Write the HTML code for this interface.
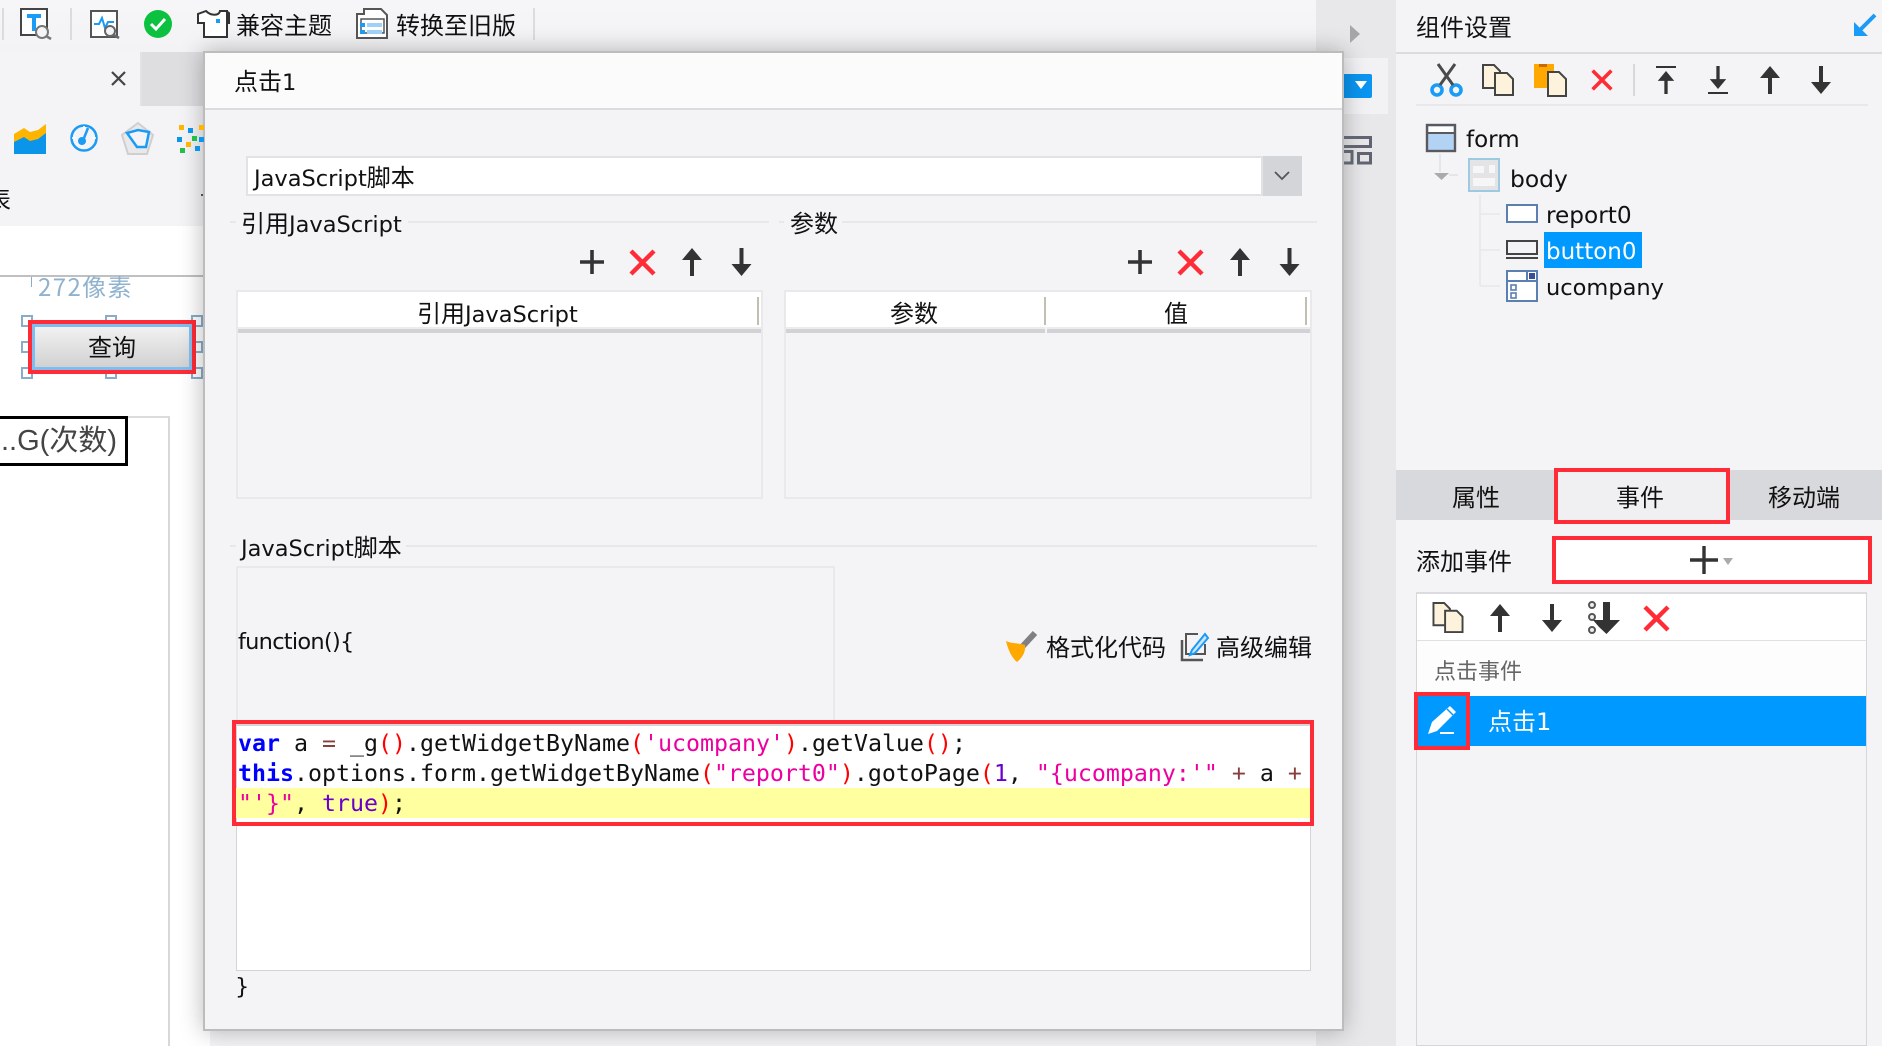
<!DOCTYPE html>
<html lang="zh"><head><meta charset="utf-8"><title>点击1</title>
<style>
html,body{margin:0;padding:0;background:#f4f4f7}
body{position:relative;width:1882px;height:1046px;overflow:hidden;font-family:"DejaVu Sans","Noto Sans CJK SC",sans-serif;color:#111}
.b{position:absolute;box-sizing:border-box}
.t{position:absolute;white-space:nowrap;font-size:22.5px;line-height:30px;height:30px;margin-top:-1px}
.t i,.c{font-family:"Noto Sans CJK SC","Liberation Sans",sans-serif;font-style:normal;font-size:24px}
.red{position:absolute;box-sizing:border-box;border:4px solid #ff2b36}
.h{position:absolute;box-sizing:border-box;width:12px;height:12px;border:2px solid #8aacc8;background:#fff}
.th{position:absolute;background:#fff}
.tl{position:absolute;height:6px;background:linear-gradient(#ececee 0,#ececee 33%,#d2d2d4 34%,#d2d2d4 100%)}
.dv{position:absolute;width:2px;background:#c2beb0}
.code{position:absolute;left:238px;font-family:"DejaVu Sans Mono","Liberation Mono",monospace;font-size:23.25px;line-height:30px;height:30px;white-space:pre;color:#111}
.k{color:#00f;font-weight:bold}.o{color:#8a3f3f}.p{color:#f00}.s{color:#ec00a0}.n{color:#6a00cc}
</style></head><body>

<!-- top toolbar -->
<div class="b" style="left:0;top:0;width:1316px;height:52px;background:linear-gradient(#f6f6f8,#f3f3f5)"></div>
<div class="b" style="left:1316px;top:0;width:80px;height:1046px;background:#e8e8ea"></div>
<div class="b" style="left:2px;top:8px;width:2px;height:32px;background:#dcdcde"></div>
<div class="b" style="left:70px;top:8px;width:2px;height:32px;background:#dcdcde"></div>
<div class="b" style="left:533px;top:8px;width:2px;height:32px;background:#dcdcde"></div>
<div class="t c" style="left:236px;top:10px">兼容主题</div>
<div class="t c" style="left:396px;top:10px">转换至旧版</div>

<!-- left tabs -->
<div class="b" style="left:0;top:52px;width:142px;height:54px;background:#f4f4f7;border-right:2px solid #e2e2e4"></div>
<div class="b" style="left:142px;top:52px;width:68px;height:54px;background:#dedee0"></div>
<div class="t c" style="left:-13px;top:184px">表</div>
<div class="b" style="left:201px;top:194px;width:3px;height:2px;background:#555"></div>

<!-- designer canvas -->
<div class="b" style="left:0;top:226px;width:210px;height:820px;background:#fff"></div>
<div class="b" style="left:0;top:275px;width:210px;height:2px;background:#c0c0c0"></div>
<div class="b" style="left:31px;top:277px;width:1px;height:10px;background:#8aacc8"></div>
<div class="t c" style="left:38px;top:272px;color:#8fb2cf;letter-spacing:1.4px">272像素</div>
<div class="h" style="left:21px;top:315px"></div><div class="h" style="left:105px;top:315px"></div><div class="h" style="left:191px;top:315px"></div>
<div class="h" style="left:21px;top:341px"></div><div class="h" style="left:191px;top:341px"></div>
<div class="h" style="left:21px;top:367px"></div><div class="h" style="left:105px;top:367px"></div><div class="h" style="left:191px;top:367px"></div>
<div class="b" style="left:28px;top:320px;width:168px;height:54px;border:4px solid #ff2b36;background:linear-gradient(#f4f4f4,#cfcfcf);box-shadow:inset 0 0 0 3px #7fbdf0"></div>
<div class="t c" style="left:88px;top:332px">查询</div>
<div class="b" style="left:0;top:416px;width:170px;height:630px;border-top:2px solid #dcdcdc;border-right:2px solid #d8d8d8"></div>
<div class="b" style="left:0;top:416px;width:128px;height:50px;border:3px solid #000;border-left:0;background:#fff"></div>
<div class="t" style="left:1px;top:427px;font-size:29px;font-family:'Liberation Sans','Noto Sans CJK SC',sans-serif;color:#444">..G(次数)</div>

<!-- right panel -->
<div class="b" style="left:1396px;top:0;width:486px;height:1046px;background:#f4f4f7"></div>
<div class="t c" style="left:1416px;top:12px">组件设置</div>
<div class="b" style="left:1396px;top:52px;width:486px;height:2px;background:#dcdcde"></div>
<div class="b" style="left:1416px;top:104px;width:452px;height:2px;background:#e8e8ea"></div>
<div class="b" style="left:1344px;top:58px;width:44px;height:56px;background:#f2f2f5"></div>
<div class="b" style="left:1344px;top:74px;width:28px;height:24px;background:#0a95f0;border-radius:0 2px 2px 0"></div>

<div class="t" style="left:1466px;top:126px;font-size:23px">form</div>
<div class="t" style="left:1510px;top:165px;font-size:23.4px">body</div>
<div class="t" style="left:1546px;top:202px;font-size:23.2px">report0</div>
<div class="b" style="left:1544px;top:232px;width:98px;height:36px;background:#09f"></div>
<div class="t" style="left:1546px;top:238px;color:#fff;font-size:23px">button0</div>
<div class="t" style="left:1546px;top:274px">ucompany</div>

<!-- tabs -->
<div class="b" style="left:1396px;top:470px;width:486px;height:50px;background:#d8d9dc"></div>
<div class="b" style="left:1554px;top:470px;width:176px;height:52px;background:#f0f0f3"></div>
<div class="t c" style="left:1452px;top:482px">属性</div>
<div class="t c" style="left:1616px;top:482px">事件</div>
<div class="t c" style="left:1768px;top:482px">移动端</div>
<div class="red" style="left:1554px;top:468px;width:176px;height:56px"></div>

<div class="t c" style="left:1416px;top:546px">添加事件</div>
<div class="b" style="left:1554px;top:538px;width:316px;height:44px;background:#fff;border:2px solid #dedee0"></div>
<div class="red" style="left:1552px;top:536px;width:320px;height:48px"></div>

<!-- event list -->
<div class="b" style="left:1416px;top:592px;width:451px;height:454px;border:1px solid #d6d6da;border-top:2px solid #dcdce0;background:#f4f4f7"></div>
<div class="b" style="left:1417px;top:594px;width:449px;height:47px;background:#fff;border-bottom:1px solid #e0e0e3"></div>
<div class="b" style="left:1417px;top:641px;width:449px;height:55px;background:#fdfdfe"></div>
<div class="t c" style="left:1434px;top:656px;font-size:22px;color:#666">点击事件</div>
<div class="b" style="left:1417px;top:696px;width:449px;height:50px;background:#09f"></div>
<div class="t c" style="left:1488px;top:706px;color:#fff">点击<span style="font-family:'DejaVu Sans'">1</span></div>
<div class="red" style="left:1414px;top:692px;width:56px;height:58px"></div>

<!-- dialog -->
<div class="b" style="left:203px;top:51px;width:1141px;height:980px;background:#f4f4f7;border:2px solid #bcbcbc;box-shadow:0 0 22px rgba(0,0,0,.28)">
</div>
<div class="b" style="left:205px;top:53px;width:1137px;height:55px;background:#fbfbfc"></div>
<div class="b" style="left:205px;top:108px;width:1137px;height:2px;background:#dcdcdf"></div>
<div class="t" style="left:234px;top:66px"><i>点击</i><span style="font-family:'DejaVu Sans'">1</span></div>

<div class="b" style="left:246px;top:156px;width:1017px;height:40px;background:#fff;border:2px solid #e2e2e5"></div>
<div class="b" style="left:1263px;top:156px;width:39px;height:40px;background:#d4d5d9"></div>
<div class="t" style="left:254px;top:162px">JavaScript<i>脚本</i></div>

<!-- fieldset 1 -->
<div class="b" style="left:230px;top:221px;width:539px;height:2px;background:#e8e8ea"></div>
<div class="b" style="left:779px;top:221px;width:538px;height:2px;background:#e8e8ea"></div>
<div class="b" style="left:236px;top:210px;width:172px;height:30px;background:#f4f4f7"></div>
<div class="b" style="left:784px;top:210px;width:58px;height:30px;background:#f4f4f7"></div>
<div class="t" style="left:241px;top:208px"><i>引用</i>JavaScript</div>
<div class="t c" style="left:790px;top:208px">参数</div>

<!-- tables -->
<div class="b" style="left:236px;top:290px;width:527px;height:209px;border:2px solid #e9e9ec"></div>
<div class="th" style="left:238px;top:292px;width:523px;height:35px"></div>
<div class="tl" style="left:238px;top:327px;width:523px"></div>
<div class="dv" style="left:757px;top:297px;height:28px"></div>
<div class="t" style="left:417px;top:298px"><i>引用</i>JavaScript</div>

<div class="b" style="left:784px;top:290px;width:528px;height:209px;border:2px solid #e9e9ec"></div>
<div class="th" style="left:786px;top:292px;width:524px;height:35px"></div>
<div class="tl" style="left:786px;top:327px;width:259px"></div>
<div class="tl" style="left:1047px;top:327px;width:263px"></div>
<div class="dv" style="left:1044px;top:297px;height:28px"></div>
<div class="dv" style="left:1305px;top:297px;height:28px"></div>
<div class="t c" style="left:890px;top:298px">参数</div>
<div class="t c" style="left:1164px;top:298px">值</div>

<!-- fieldset 2 -->
<div class="b" style="left:230px;top:545px;width:1087px;height:2px;background:#e8e8ea"></div>
<div class="b" style="left:236px;top:532px;width:170px;height:30px;background:#f4f4f7"></div>
<div class="t" style="left:241px;top:532px">JavaScript<i>脚本</i></div>
<div class="b" style="left:236px;top:566px;width:599px;height:156px;border:2px solid #e9e9ec;border-bottom:0"></div>
<div class="t" style="left:238px;top:628px;letter-spacing:-.75px">function(){</div>
<div class="t c" style="left:1046px;top:632px">格式化代码</div>
<div class="t c" style="left:1216px;top:632px">高级编辑</div>

<!-- editor -->
<div class="b" style="left:236px;top:724px;width:1075px;height:247px;background:#fff;border:1px solid #d4d4d8;border-top:2px solid #d4d4d8"></div>
<div class="b" style="left:236px;top:788px;width:1074px;height:30px;background:#ffff9f"></div>
<div class="code" style="top:729px"><span class="k">var</span> a <span class="o">=</span> _g<span class="p">()</span>.getWidgetByName<span class="p">(</span><span class="s">'ucompany'</span><span class="p">)</span>.getValue<span class="p">()</span>;</div>
<div class="code" style="top:759px"><span class="k">this</span>.options.form.getWidgetByName<span class="p">(</span><span class="s">"report0"</span><span class="p">)</span>.gotoPage<span class="p">(</span><span class="n">1</span>, <span class="s">"{ucompany:'"</span> <span class="o">+</span> a <span class="o">+</span></div>
<div class="code" style="top:789px"><span class="s">"'}"</span>, <span class="n">true</span><span class="p">)</span>;</div>
<div class="red" style="left:232px;top:720px;width:1082px;height:106px"></div>
<div class="t" style="left:235px;top:973px">}</div>

<!-- icon overlay -->
<svg width="1882" height="1046" viewBox="0 0 1882 1046" style="position:absolute;left:0;top:0">
<defs>
<symbol id="up" viewBox="0 0 20 28" overflow="visible"><path d="M10 0L20 12H12V28H8V12H0Z" fill="#333"/></symbol>
<symbol id="dn" viewBox="0 0 20 28" overflow="visible"><path d="M8 0H12V16H20L10 28L0 16H8Z" fill="#333"/></symbol>
<symbol id="pl" viewBox="0 0 24 24" overflow="visible"><path d="M12 0V24M0 12H24" stroke="#333" stroke-width="3.6" fill="none"/></symbol>
<symbol id="xx" viewBox="0 0 27 27" overflow="visible"><path d="M2 2L25 25M25 2L2 25" stroke="#ff2b36" stroke-width="4.4" fill="none"/></symbol>
<symbol id="cp" viewBox="0 0 32 32" overflow="visible"><path d="M1 1H12L18 7V24H1Z" fill="#fdf3dc" stroke="#444" stroke-width="2"/><path d="M13 9H25L31 15V31H13Z" fill="#fdf3dc" stroke="#444" stroke-width="2"/></symbol>
</defs>

<!-- top toolbar icons -->
<rect x="21" y="9" width="26" height="26" fill="#fff" stroke="#444" stroke-width="2"/>
<path d="M27 14H41V18H36V31H32V18H27Z" fill="#1a9bf5"/>
<circle cx="42" cy="32" r="6" fill="#f4f4f7" stroke="#777" stroke-width="2"/><path d="M46 36L51 39" stroke="#777" stroke-width="2.5"/>
<rect x="91" y="11" width="26" height="26" fill="#fff" stroke="#555" stroke-width="2"/>
<path d="M94 24H99L102 18L105 28L108 22H114" stroke="#1a9bf5" stroke-width="2" fill="none"/>
<circle cx="110" cy="31" r="5" fill="#f4f4f7" stroke="#666" stroke-width="2"/><path d="M114 35L119 38" stroke="#666" stroke-width="2.5"/>
<ellipse cx="158" cy="24" rx="14" ry="14" fill="#0cc040"/><path d="M151 24L156 29L165 19" stroke="#fff" stroke-width="3" fill="none"/>
<path d="M206 11L198 14V23H204V37H227V11H220C219 16 211 16 206 11Z" fill="#fff" stroke="#333" stroke-width="2"/>
<path d="M226 11L229 13V23H227" fill="none" stroke="#333" stroke-width="2"/>
<rect x="216" y="19" width="4" height="4" fill="#1a9bf5"/>
<path d="M364 9H381L387 15V38H357V14H364Z" fill="#fff" stroke="#555" stroke-width="2"/>
<path d="M361 19H384V33H361Z" fill="#fff" stroke="#555" stroke-width="1.5"/>
<rect x="360" y="23" width="5" height="4" fill="#1a9bf5"/><rect x="360" y="30" width="5" height="4" fill="#1a9bf5"/><rect x="367" y="23" width="15" height="4" fill="#9fd0f7"/><rect x="367" y="30" width="15" height="4" fill="#9fd0f7"/>

<!-- close -->
<path d="M112 72L125 85M125 72L112 85" stroke="#444" stroke-width="2.2"/>

<!-- chart icons -->
<path d="M14 134L24 128L30 132L38 130L46 124V154H14Z" fill="#ffb400"/>
<path d="M14 142L24 137L30 141L38 139L46 133V154H14Z" fill="#0a95ea"/>
<circle cx="84" cy="138" r="12.5" fill="none" stroke="#1a9bf5" stroke-width="2.5"/>
<circle cx="82" cy="141" r="4" fill="#1a9bf5"/><path d="M84 138L88 128" stroke="#1a9bf5" stroke-width="2.5"/>
<path d="M72 138H76M92 138H96M84 126V130" stroke="#fff" stroke-width="1.5"/>
<path d="M138 123L153 135L147 154H128L122 135Z" fill="#e9e9ea" stroke="#cfcfcf" stroke-width="2"/>
<path d="M127 133L138 130L149 132L146 147L137 147Z" fill="#f4f4f7" stroke="#1a9bf5" stroke-width="2.5"/>
<g>
<rect x="179" y="125" width="5" height="5" fill="#ffb400"/><rect x="188" y="128" width="5" height="5" fill="#0a95ea"/><rect x="199" y="125" width="5" height="5" fill="#ffb400"/>
<rect x="177" y="137" width="5" height="5" fill="#0a95ea"/><rect x="192" y="136" width="5" height="5" fill="#22c04a"/><rect x="199" y="137" width="5" height="5" fill="#0a95ea"/>
<rect x="186" y="142" width="5" height="5" fill="#ffb400"/><rect x="195" y="146" width="5" height="5" fill="#0a95ea"/><rect x="180" y="148" width="5" height="5" fill="#22c04a"/>
</g>

<!-- side strip -->
<path d="M1350 25L1360 34L1350 43Z" fill="#a6a6a8"/>
<path d="M1355 81L1367 81L1361 89Z" fill="#fff"/>
<path d="M1344 137.5H1370.5V146.5H1344M1344 151.5H1352V163H1344M1358.5 153.5H1370.5V163H1358.5Z" fill="none" stroke="#5f6470" stroke-width="3"/>

<!-- chevron -->
<path d="M1275 172L1282 179L1289 172" fill="none" stroke="#555" stroke-width="1.8"/>

<!-- dialog toolbars -->
<use href="#pl" x="580" y="250" width="24" height="24"/><use href="#xx" x="629" y="249" width="27" height="27"/><use href="#up" x="682" y="248" width="20" height="28"/><use href="#dn" x="731.5" y="248" width="20" height="28"/>
<use href="#pl" x="1128" y="250" width="24" height="24"/><use href="#xx" x="1177" y="249" width="27" height="27"/><use href="#up" x="1230" y="248" width="20" height="28"/><use href="#dn" x="1279.5" y="248" width="20" height="28"/>

<!-- broom -->
<path d="M1022 647L1035 633" stroke="#808084" stroke-width="6"/>
<path d="M1006 641C1012 644 1020 643 1025 645C1026 652 1022 658 1017 662C1012 658 1008 650 1006 641Z" fill="#ffa800"/>
<!-- edit -->
<path d="M1198 634H1186V654H1205V644" fill="none" stroke="#555" stroke-width="2"/>
<path d="M1182 640V660H1203" fill="none" stroke="#555" stroke-width="2.5"/>
<path d="M1192 650L1190 655L1195 653L1208 638L1205 634Z" fill="#cce6fb" stroke="#1a9bf5" stroke-width="2"/>

<!-- right toolbar -->
<circle cx="1437" cy="90" r="5" fill="none" stroke="#1a9bf5" stroke-width="3.6"/><circle cx="1456" cy="90" r="5" fill="none" stroke="#1a9bf5" stroke-width="3.6"/>
<path d="M1440 85L1455 64M1453 85L1438 64" stroke="#4a4a4a" stroke-width="3"/>
<use href="#cp" x="1482" y="64" width="32" height="32"/>
<rect x="1534" y="64" width="20" height="24" fill="#ffa800"/><rect x="1539" y="64" width="8" height="3" fill="#c86a00"/>
<path d="M1548 72H1559L1566 79V96H1548Z" fill="#fdf3dc" stroke="#444" stroke-width="2"/>
<use href="#xx" x="1591" y="69" width="22" height="22"/>
<rect x="1633" y="64" width="2" height="32" fill="#d8d8da"/>
<rect x="1656" y="66" width="20" height="2" fill="#333"/><use href="#up" x="1656" y="71" width="20" height="23"/>
<use href="#dn" x="1708" y="66" width="20" height="23"/><rect x="1708" y="92" width="20" height="2" fill="#333"/>
<use href="#up" x="1760" y="66" width="20" height="28"/><use href="#dn" x="1811" y="66" width="20" height="28"/>
<!-- blue collapse arrow -->
<path d="M1875 15L1860 30" stroke="#1a9bf5" stroke-width="4"/>
<path d="M1854 36V22L1859 27L1863 31L1868 36Z" fill="#1a9bf5"/>

<!-- tree -->
<rect x="1427" y="125" width="28" height="26" fill="#b3d3f5" stroke="#5a5a5e" stroke-width="2.4"/><rect x="1428.5" y="126.5" width="25" height="6" fill="#fff"/><rect x="1428" y="132" width="26" height="2" fill="#5a5a5e"/>
<path d="M1440 154V172" stroke="#e2e2e5" stroke-width="1.5"/><path d="M1434 173H1449L1441.5 180Z" fill="#aaa"/><path d="M1449 175H1458" stroke="#e2e2e5" stroke-width="1.5"/>
<rect x="1469" y="159" width="30" height="32" fill="#e4e4e6" stroke="#9ccae0" stroke-width="2"/>
<rect x="1473" y="166" width="11" height="7" fill="#f6f6f6"/><rect x="1489" y="165" width="6" height="8" fill="#f6f6f6"/><rect x="1473" y="178" width="22" height="8" fill="#f6f6f6"/>
<path d="M1480 195V286M1480 214H1500M1480 250H1500M1480 286H1500" stroke="#e8e8ea" stroke-width="1.6" fill="none"/>
<rect x="1507" y="205" width="30" height="17" fill="#fff" stroke="#5b7fb0" stroke-width="2"/>
<rect x="1507" y="241" width="30" height="13" fill="#f4f4f7" stroke="#444" stroke-width="2"/><rect x="1506" y="257" width="32" height="2" fill="#444"/>
<rect x="1507" y="271" width="30" height="30" fill="#fff" stroke="#5b7fb0" stroke-width="2"/><path d="M1507 281H1537M1527 271V281" stroke="#5b7fb0" stroke-width="2"/>
<rect x="1529" y="273" width="6" height="6" fill="#3a4f9a"/>
<rect x="1511" y="285" width="5" height="5" fill="none" stroke="#5b7fb0" stroke-width="1.6"/><rect x="1511" y="293" width="5" height="5" fill="none" stroke="#5b7fb0" stroke-width="1.6"/>

<!-- add event -->
<path d="M1704 546V574M1690 560H1718" stroke="#333" stroke-width="3.4"/>
<path d="M1723 558H1733L1728 565Z" fill="#aaa"/>

<!-- event list icons -->
<use href="#cp" x="1432" y="602" width="32" height="31"/>
<use href="#up" x="1490" y="604" width="20" height="28"/>
<use href="#dn" x="1542" y="604" width="20" height="28"/>
<circle cx="1592" cy="605" r="3" fill="#eee" stroke="#555" stroke-width="2"/><circle cx="1592" cy="617" r="3" fill="#eee" stroke="#555" stroke-width="2"/><circle cx="1592" cy="630" r="3" fill="#eee" stroke="#555" stroke-width="2"/>
<path d="M1603 602H1610V620H1620L1606.5 634L1599 627L1593 620H1603Z" fill="#333" transform="translate(0 0)"/>
<use href="#xx" x="1643" y="605" width="27" height="27"/>

<!-- pencil -->
<path d="M1432 722L1450 706L1456 712L1437 731L1428 734Z" fill="#fff"/>
<path d="M1447 709L1453 715" stroke="#09f" stroke-width="1.5"/>
<rect x="1440" y="732" width="14" height="2" fill="#fff"/>
</svg>
</body></html>
